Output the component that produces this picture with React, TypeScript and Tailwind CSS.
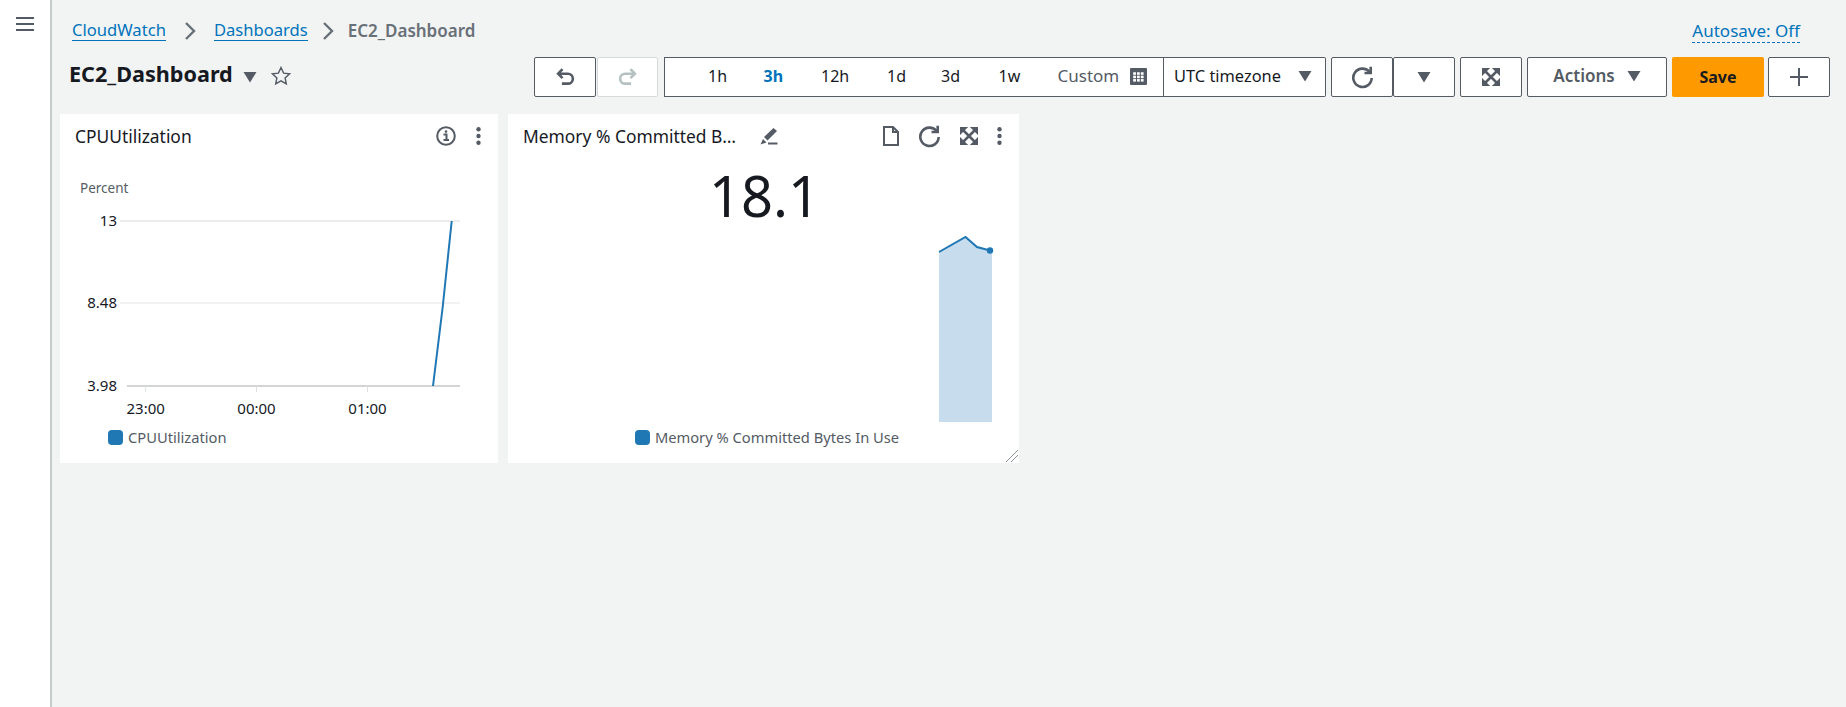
import type { ReactNode } from "react";

const GRAY = "#545b64";

function Icon({ children, size = 16, className = "" }: { children: ReactNode; size?: number; className?: string }) {
  return (
    <svg width={size} height={size} viewBox="0 0 16 16" fill="none" stroke={GRAY} strokeWidth={2} className={className}>
      {children}
    </svg>
  );
}

function Caret({ size = 14 }: { size?: number }) {
  return (
    <svg width={size} height={size} viewBox="0 0 14 14">
      <path d="M0.5 2h13L7 12.5z" fill={GRAY} />
    </svg>
  );
}

function ExpandIcon({ size = 18 }: { size?: number }) {
  return (
    <svg width={size} height={size} viewBox="0 0 16 16" fill={GRAY} stroke={GRAY}>
      <path d="M0 0h7.2L0 7.2zM16 0v7.2L8.8 0zM16 16H8.8L16 8.8zM0 16V8.8L7.2 16z" stroke="none" />
      <path d="M2 2l12 12M14 2L2 14" strokeWidth={2.2} />
      <path d="M0 0h16v16H0z" fill="none" strokeWidth={1.2} strokeDasharray="6.4 3.2 6.4 0" />
    </svg>
  );
}

function RefreshIcon({ size = 23 }: { size?: number }) {
  return (
    <Icon size={size}>
      <path d="M13 4.2A6.4 6.4 0 1 0 14.4 8.4" strokeWidth={1.8} />
      <path d="M13.7 0.6v4.3H9.4" strokeWidth={1.8} />
    </Icon>
  );
}

function Dots() {
  return (
    <svg width={5} height={18} viewBox="0 0 5 18" fill={GRAY}>
      <circle cx={2.5} cy={2.2} r={2.2} />
      <circle cx={2.5} cy={9} r={2.2} />
      <circle cx={2.5} cy={15.8} r={2.2} />
    </svg>
  );
}

function Btn({ children, className = "" }: { children: ReactNode; className?: string }) {
  return (
    <button className={`h-10 flex items-center justify-center bg-white border border-[#545b64] rounded-[2px] ${className}`}>
      {children}
    </button>
  );
}

function Crumb({ children }: { children: ReactNode }) {
  return <a className="text-[#0073bb] border-b border-[#0073bb] leading-[20px] text-[16.6px]">{children}</a>;
}

function Chevron({ className = "" }: { className?: string }) {
  return (
    <svg width={12} height={18} viewBox="0 0 12 18" fill="none" stroke="#687078" strokeWidth={2.4} className={className}>
      <path d="M2 1l8 8-8 8" />
    </svg>
  );
}

function CpuChart() {
  return (
    <svg width={438} height={265} viewBox="0 0 438 265" className="block">
      <text x={20} y={35} fill="#545b64" fontSize={13.5}>Percent</text>
      <line x1={60} x2={400} y1={63} y2={63} stroke="#e6e8e8" strokeWidth={1.5} />
      <line x1={60} x2={400} y1={145} y2={145} stroke="#eceeee" strokeWidth={1.5} />
      <line x1={67} x2={400} y1={228} y2={228} stroke="#c4c6c8" strokeWidth={1.5} />
      {[85.7, 196.5, 307.5].map((x) => (
        <line key={x} x1={x} x2={x} y1={228} y2={234} stroke="#dfe1e1" />
      ))}
      <g fill="#16191f" textAnchor="end" fontSize={15}>
        <text x={57} y={68}>13</text>
        <text x={57} y={150}>8.48</text>
        <text x={57} y={233}>3.98</text>
      </g>
      <g fill="#16191f" textAnchor="middle" fontSize={15}>
        <text x={85.7} y={256}>23:00</text>
        <text x={196.5} y={256}>00:00</text>
        <text x={307.5} y={256}>01:00</text>
      </g>
      <path d="M373 228L382.7 149L391.7 63" stroke="#1f77b4" strokeWidth={2} fill="none" />
    </svg>
  );
}

function MemoryChart() {
  return (
    <svg width={511} height={196} viewBox="0 0 511 196" className="block">
      <path d="M431 26L457.5 11L469 21L484 24.5V196H431z" fill="#c7dcec" />
      <path d="M431 26L457.5 11L469 21L482 24.5" stroke="#1f77b4" strokeWidth={2} fill="none" />
      <circle cx={482} cy={24.5} r={3.2} fill="#1f77b4" />
    </svg>
  );
}

function Legend({ label, className = "" }: { label: string; className?: string }) {
  return (
    <div className={`flex items-center h-5 text-[14.7px] text-[#545b64] ${className}`}>
      <span className="w-[15px] h-[15px] rounded-[4px] bg-[#1f77b4] mr-[5px]" />
      {label}
    </div>
  );
}

export default function App() {
  return (
    <div className="flex h-[707px] bg-[#f2f3f3] overflow-hidden text-[#16191f]" style={{ fontFamily: '"Noto Sans", sans-serif' }}>
      {/* side nav */}
      <aside className="w-[52px] shrink-0 bg-white border-r-2 border-[#c6cbcb] pt-[16px] pl-[16px]">
        <svg width={18} height={16} viewBox="0 0 18 16" stroke={GRAY} strokeWidth={2}>
          <path d="M0 2h18M0 8h18M0 14h18" />
        </svg>
      </aside>

      <main className="flex-1 min-w-0 pl-[8px] pr-[16px]">
        <div className="flex items-start justify-between h-[57px] pt-[20px]">
          <nav className="flex items-center pl-[12px]">
            <Crumb>CloudWatch</Crumb>
            <Chevron className="mx-[18px]" />
            <Crumb>Dashboards</Crumb>
            <Chevron className="mx-[14px]" />
            <span className="text-[17px] font-semibold text-[#687078] leading-[20px]">EC2_Dashboard</span>
          </nav>
          <span className="text-[17px] text-[#0073bb] border-b border-dashed border-[#0073bb] leading-[22px] mr-[30px]">
            Autosave: Off
          </span>
        </div>

        <div className="flex items-center justify-between h-[40px]">
          <div className="flex items-center pl-[9px] pb-[7px]">
            <h1 className="text-[21.6px] font-bold leading-[26px]">EC2_Dashboard</h1>
            <span className="ml-[10px] mr-[14px] pt-[7px]"><Caret /></span>
            <svg width={20} height={20} viewBox="0 0 20 20" fill="none" stroke={GRAY} strokeWidth={1.4} className="mt-[4px]">
              <path d="M10 1.5l2.6 5.6 6 .7-4.5 4.1 1.2 6L10 14.9 4.7 17.9l1.2-6L1.4 7.8l6-.7z" />
            </svg>
          </div>

          <div className="flex items-center">
            <Btn className="w-[62px]">
              <Icon size={19}><path d="M5.5 1L1.8 4.8l3.7 3.7M2 4.8h8a4 4 0 0 1 0 8.4H5" strokeWidth={2.2} /></Icon>
            </Btn>
            <button className="h-10 w-[61px] ml-[1px] flex items-center justify-center bg-white border border-[#d5dbdb] rounded-[2px]">
              <svg width={19} height={19} viewBox="0 0 16 16" fill="none" stroke="#b5c1c1" strokeWidth={2.2}>
                <path d="M10.5 1l3.7 3.8-3.7 3.7M14 4.8H6a4 4 0 0 0 0 8.4h5" />
              </svg>
            </button>

            <div className="h-10 w-[500px] ml-[6px] flex items-center bg-white border border-[#545b64] text-[16px] pl-[43px] pb-[2px]">
              <span className="w-[55.5px]">1h</span>
              <span className="w-[57.5px] font-bold text-[#0073bb]">3h</span>
              <span className="w-[66px]">12h</span>
              <span className="w-[54px]">1d</span>
              <span className="w-[57.5px]">3d</span>
              <span className="w-[59px]">1w</span>
              <span className="text-[17px] text-[#545b64] mr-[11px]">Custom</span>
              <svg width={17} height={17} viewBox="0 0 16 16">
                <rect width={16} height={16} rx={1} fill={GRAY} />
                {[3, 6.6, 10.2].map((x) =>
                  [4, 7.2, 10.4].map((y) => <rect key={`${x}-${y}`} x={x} y={y} width={2.6} height={2.4} fill="#fff" />),
                )}
              </svg>
            </div>
            <div className="h-10 w-[162px] flex items-center justify-between bg-white border border-l-0 border-[#545b64] rounded-r-[2px] text-[16.4px] pl-[10px] pr-[13px] pb-[2px]">
              UTC timezone <Caret />
            </div>

            <Btn className="w-[62px] ml-[5px]"><RefreshIcon /></Btn>
            <Btn className="w-[62px]"><Caret /></Btn>
            <Btn className="w-[62px] ml-[5px]"><ExpandIcon /></Btn>
            <Btn className="w-[140px] ml-[5px] text-[17px] font-semibold text-[#545b64] pb-[2px]">
              Actions<span className="ml-[12px]"><Caret /></span>
            </Btn>
            <button className="h-10 w-[92px] ml-[5px] bg-[#ff9900] rounded-[2px] text-[16px] font-bold text-[#16191f]">Save</button>
            <Btn className="w-[62px] ml-[4px]">
              <svg width={18} height={18} viewBox="0 0 18 18" stroke={GRAY} strokeWidth={2}>
                <path d="M9 0v18M0 9h18" />
              </svg>
            </Btn>
          </div>
        </div>

        <div className="flex gap-[10px] mt-[17px]">
          {/* CPU widget */}
          <section className="w-[438px] h-[349px] bg-white">
            <header className="flex items-center justify-between h-[44px] pl-[15px] pr-[17px]">
              <span className="text-[17.4px]">CPUUtilization</span>
              <div className="flex items-center gap-[20px]">
                <svg width={20} height={20} viewBox="0 0 20 20" fill="none">
                  <circle cx={10} cy={10} r={8.8} stroke={GRAY} strokeWidth={2} />
                  <path d="M7.5 8.5H10.5V14M7.5 14H13" stroke={GRAY} strokeWidth={2} />
                  <circle cx={10} cy={5.6} r={1.3} fill={GRAY} />
                </svg>
                <Dots />
              </div>
            </header>
            <CpuChart />
            <Legend label="CPUUtilization" className="ml-[48px] mt-[4px]" />
          </section>

          {/* Memory widget */}
          <section className="w-[511px] h-[349px] bg-white flex flex-col relative">
            <header className="flex items-center h-[44px] pl-[15px] pr-[17px]">
              <span className="text-[17.4px] whitespace-nowrap">Memory % Committed B…</span>
              <svg width={18} height={18} viewBox="0 0 18 18" className="ml-[24px]">
                <path d="M13.5 1L17 4 7.5 13.5 4 10z" fill={GRAY} />
                <path d="M8 16.5h9.5" stroke={GRAY} strokeWidth={2} />
                <path d="M0.5 17.5L3 12l3.5 3.5z" fill={GRAY} />
              </svg>
              <div className="ml-auto flex items-center gap-[19px]">
                <svg width={16} height={20} viewBox="0 0 16 20" fill="none" stroke={GRAY} strokeWidth={2}>
                  <path d="M1 1h9l5 5v13H1zM10 1v5h5" />
                </svg>
                <RefreshIcon size={23} />
                <ExpandIcon size={18} />
                <Dots />
              </div>
            </header>
            <div className="text-center text-[56px] leading-[62px] mt-[6px] pl-[2px]">18.1</div>
            <MemoryChart />
            <Legend label="Memory % Committed Bytes In Use" className="justify-center pl-[7px] mt-[5px]" />
            {/* resize handle */}
            <svg width={14} height={14} viewBox="0 0 14 14" stroke="#879596" className="absolute right-0 bottom-0">
              <path d="M1 13L13 1M6 13l7-7" />
            </svg>
          </section>
        </div>
      </main>
    </div>
  );
}
